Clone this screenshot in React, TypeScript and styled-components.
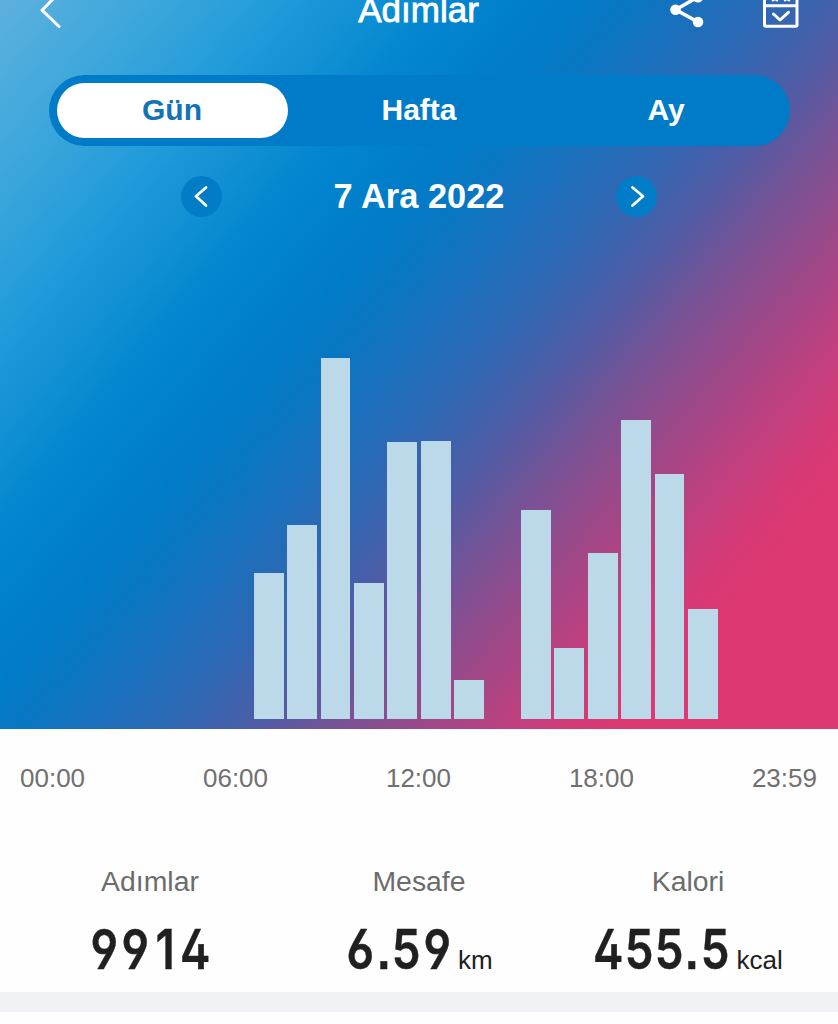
import React from 'react';
import styled, { createGlobalStyle } from 'styled-components';

const GlobalStyle = createGlobalStyle`
  body {
    margin: 0;
    background: #fefefe;
    font-family: 'Liberation Sans', Arial, sans-serif;
  }
`;

const Screen = styled.main`
  width: 838px;
  height: 1024px;
  overflow: hidden;
  display: flex;
  flex-direction: column;
`;

const Hero = styled.section`
  height: 728.5px;
  flex: none;
  display: flex;
  flex-direction: column;
  color: #fff;
  background: linear-gradient(
    130deg,
    #5db1dd 0%,
    #3ba6dc 11%,
    #1f9ad9 20%,
    #0386cf 31%,
    #007bc7 39.5%,
    #0a76c2 44%,
    #2d68b4 53.5%,
    #505ca5 60%,
    #755396 65%,
    #9e4888 71.5%,
    #be4080 77%,
    #d73a75 82.5%,
    #de3872 86.5%
  );
`;

const Header = styled.header`
  height: 75px;
  flex: none;
  display: grid;
  grid-template-columns: 1fr auto 1fr;
  align-items: start;
  padding: 0 39px 0 38px;
`;

const Title = styled.h1`
  margin: -10px 0 0;
  font-size: 35px;
  line-height: 40px;
  font-weight: 400;
  -webkit-text-stroke: 0.8px #fff;
`;

const Icon = styled.svg`
  display: block;
  fill: none;
  stroke: #fff;
  stroke-linecap: round;
  stroke-linejoin: round;
`;

const Actions = styled.div`
  display: flex;
  justify-content: flex-end;
  gap: 58px;
`;

const Tabs = styled.nav`
  height: 70.5px;
  flex: none;
  margin: 0 48.5px;
  display: grid;
  grid-template-columns: repeat(3, 1fr);
  border-radius: 36px;
  background: #007bc7;
`;

const Tab = styled.button<{ $active?: boolean }>`
  margin: 8px;
  padding: 0;
  border: 0;
  border-radius: 28px;
  background: ${(p) => (p.$active ? '#fff' : 'transparent')};
  color: ${(p) => (p.$active ? '#1273b6' : '#fff')};
  font: bold 30px 'Liberation Sans', Arial, sans-serif;
`;

const DateRow = styled.div`
  height: 41px;
  flex: none;
  margin: 30px 181px 0;
  display: flex;
  align-items: center;
  justify-content: space-between;
  font-size: 34.4px;
  font-weight: bold;
`;

const RoundButton = styled.button`
  width: 41px;
  height: 41px;
  padding: 0;
  border: 0;
  border-radius: 50%;
  background: #007dc6;
`;

const Chart = styled.div`
  flex: 1;
  display: flex;
  align-items: flex-end;
  gap: 3.65px;
  padding: 0 20px 10px 20.2px;
`;

const Bar = styled.div`
  flex: 1;
  background: #bcd9e9;
`;

const Times = styled.div`
  height: 99px;
  flex: none;
  box-sizing: border-box;
  padding: 0 21px 0 20px;
  display: flex;
  justify-content: space-between;
  align-items: center;
  color: #707070;
  font-size: 26px;
`;

const Stats = styled.section`
  height: 164.5px;
  flex: none;
  display: grid;
  grid-template-columns: 269px 1fr 269px;
  padding: 0 15.5px;
`;

const Stat = styled.div`
  display: flex;
  flex-direction: column;
  align-items: center;
  padding-top: 36px;
`;

const StatLabel = styled.div`
  color: #6c6c6c;
  font-size: 28.4px;
  line-height: 34px;
`;

const StatValue = styled.div`
  margin-top: 18px;
  display: flex;
  align-items: baseline;
  color: #202020;
  line-height: 66px;
`;

const Digit = styled.span<{ $narrow: boolean }>`
  width: ${(p) => (p.$narrow ? 15.6 : 30.4)}px;
  display: flex;
  justify-content: center;
  font-family: Inter, sans-serif;
  font-size: 55px;
  font-weight: 600;
  -webkit-text-stroke: 0.4px #202020;
  font-feature-settings: 'cv02', 'cv03', 'cv04', 'ss07';
  transform: scaleX(0.83);
`;

const Unit = styled.span`
  margin-left: 6px;
  font-size: 26px;
`;

const Divider = styled.div`
  height: 20px;
  flex: none;
  background: #f0f2f5;
`;

const hours = [
  0, 0, 0, 0, 0, 0, 0, 146, 194, 360.5, 136, 276.5, 277.5, 39, 0, 208.5, 70.5,
  166, 298.5, 244.5, 110, 0, 0, 0,
];

const labels = ['00:00', '06:00', '12:00', '18:00', '23:59'];

const stats = [
  { label: 'Adımlar', value: '9914', unit: '' },
  { label: 'Mesafe', value: '6.59', unit: 'km' },
  { label: 'Kalori', value: '455.5', unit: 'kcal' },
];

export default function App() {
  return (
    <Screen>
      <GlobalStyle />
      <Hero>
        <Header>
          <Icon width="26" height="32" strokeWidth="3">
            <path d="M21 -7 4 10.2 21 26.5" />
          </Icon>
          <Title>Adımlar</Title>
          <Actions>
            <Icon width="36" height="32" strokeWidth="3.6">
              <path d="M29 -3 6.5 9.7 29 22" />
              <g fill="#fff" stroke="none">
                <circle cx="6.5" cy="9.7" r="5.3" />
                <circle cx="29" cy="22" r="5.3" />
                <circle cx="29" cy="-2.8" r="5.3" />
              </g>
            </Icon>
            <Icon width="36" height="32" strokeWidth="3">
              <path d="M1.5 -8V25Q1.5 26.3 2.8 26.3H32.7Q34 26.3 34 25V-8M1.5 5.7H34M10.5 14 17 20 25.5 12.3" />
              <path
                strokeWidth="2.4"
                d="M10 0.2 12 -1.2 14 0.2M22 0.2 24 -1.2 26 0.2"
              />
            </Icon>
          </Actions>
        </Header>
        <Tabs>
          <Tab $active>Gün</Tab>
          <Tab>Hafta</Tab>
          <Tab>Ay</Tab>
        </Tabs>
        <DateRow>
          <RoundButton aria-label="Önceki gün">
            <Icon width="41" height="41" strokeWidth="2.8">
              <path d="M25 11.5 15 20.3 25 29.5" />
            </Icon>
          </RoundButton>
          <span>7 Ara 2022</span>
          <RoundButton aria-label="Sonraki gün">
            <Icon width="41" height="41" strokeWidth="2.8">
              <path d="M16.5 11.5 27 20.3 16.5 29.5" />
            </Icon>
          </RoundButton>
        </DateRow>
        <Chart>
          {hours.map((h, i) => (
            <Bar key={i} style={{ height: h }} />
          ))}
        </Chart>
      </Hero>
      <Times>
        {labels.map((t) => (
          <span key={t}>{t}</span>
        ))}
      </Times>
      <Stats>
        {stats.map((s) => (
          <Stat key={s.label}>
            <StatLabel>{s.label}</StatLabel>
            <StatValue>
              {s.value.split('').map((c, i) => (
                <Digit key={i} $narrow={c === '.'}>
                  {c}
                </Digit>
              ))}
              {s.unit && <Unit>{s.unit}</Unit>}
            </StatValue>
          </Stat>
        ))}
      </Stats>
      <Divider />
    </Screen>
  );
}
